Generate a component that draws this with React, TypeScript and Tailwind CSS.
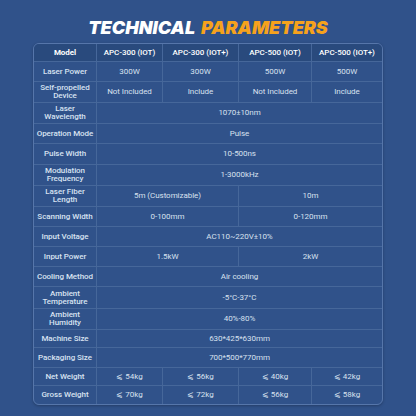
import React from "react";

type Cell = { t: string; span?: number };
type Row = { label: string; cells: Cell[] };

const rows: Row[] = [
  { label: "Laser Power", cells: [{ t: "300W" }, { t: "300W" }, { t: "500W" }, { t: "500W" }] },
  { label: "Self-propelled Device", cells: [{ t: "Not Included" }, { t: "Include" }, { t: "Not Included" }, { t: "Include" }] },
  { label: "Laser Wavelength", cells: [{ t: "1070±10nm", span: 4 }] },
  { label: "Operation Mode", cells: [{ t: "Pulse", span: 4 }] },
  { label: "Pulse Width", cells: [{ t: "10-500ns", span: 4 }] },
  { label: "Modulation Frequency", cells: [{ t: "1-3000kHz", span: 4 }] },
  { label: "Laser Fiber Length", cells: [{ t: "5m (Customizable)", span: 2 }, { t: "10m", span: 2 }] },
  { label: "Scanning Width", cells: [{ t: "0-100mm", span: 2 }, { t: "0-120mm", span: 2 }] },
  { label: "Input Voltage", cells: [{ t: "AC110~220V±10%", span: 4 }] },
  { label: "Input Power", cells: [{ t: "1.5kW", span: 2 }, { t: "2kW", span: 2 }] },
  { label: "Cooling Method", cells: [{ t: "Air cooling", span: 4 }] },
  { label: "Ambient Temperature", cells: [{ t: "-5°C-37°C", span: 4 }] },
  { label: "Ambient Humidity", cells: [{ t: "40%-80%", span: 4 }] },
  { label: "Machine Size", cells: [{ t: "630*425*630mm", span: 4 }] },
  { label: "Packaging Size", cells: [{ t: "700*500*770mm", span: 4 }] },
  { label: "Net Weight", cells: [{ t: "⩽ 54kg" }, { t: "⩽ 56kg" }, { t: "⩽ 40kg" }, { t: "⩽ 42kg" }] },
  { label: "Gross Weight", cells: [{ t: "⩽ 70kg" }, { t: "⩽ 72kg" }, { t: "⩽ 56kg" }, { t: "⩽ 58kg" }] },
];

const twoLine: Record<string, [string, string]> = {
  "Self-propelled Device": ["Self-propelled", "Device"],
  "Laser Wavelength": ["Laser", "Wavelength"],
  "Modulation Frequency": ["Modulation", "Frequency"],
  "Laser Fiber Length": ["Laser Fiber", "Length"],
  "Ambient Temperature": ["Ambient", "Temperature"],
  "Ambient Humidity": ["Ambient", "Humidity"],
};

const headers = ["APC-300 (IOT)", "APC-300 (IOT+)", "APC-500 (IOT)", "APC-500 (IOT+)"];

const spanClass: Record<number, string> = {
  1: "col-span-1",
  2: "col-span-2",
  4: "col-span-4",
};

export default function App() {
  const lastRow = rows.length - 1;
  return (
    <div
      className="w-[416px] h-[416px] bg-[#30528a] flex flex-col items-center overflow-hidden"
      style={{ fontFamily: "Roboto, 'Liberation Sans', sans-serif" }}
    >
      <div
        className="mt-[14px] h-[27px] flex items-center text-[18px] font-black italic tracking-[0px] leading-none"
        style={{ fontFamily: "Inter, 'Liberation Sans', sans-serif" }}
      >
        <span className="text-white">TECHNICAL</span>
        <span className="text-[#f6a21c] ml-[6px]">PARAMETERS</span>
      </div>
      <div className="mt-[2px] w-[350px] border border-[#5676aa] rounded-[6px] overflow-hidden shadow-[0_1px_3px_rgba(0,0,0,0.25)]">
        <div className="grid grid-cols-[63px_66px_76px_73px_70px] grid-rows-[18px_20px_21px_21px_20px_21px_21px_21px_20px_20px_20px_20px_22px_21px_18px_20px_18px_18px] text-[8px] leading-[8px] text-[#dfe7f3] tracking-[-0.05px]">
          <div className="bg-[#294a7d] border-r border-b border-[#46679a] flex items-center justify-center font-bold text-white">
            Model
          </div>
          {headers.map((h, i) => (
            <div
              key={h}
              className={`bg-[#294a7d] border-b border-[#46679a] flex items-center justify-center font-medium text-white ${
                i < 3 ? "border-r" : ""
              }`}
            >
              {h}
            </div>
          ))}
          {rows.map((r, ri) => (
            <React.Fragment key={r.label}>
              <div
                className={`border-r border-[#46679a] flex flex-col items-center justify-center text-center font-medium text-[#d8e2f1] whitespace-nowrap ${
                  ri < lastRow ? "border-b" : ""
                }`}
              >
                {twoLine[r.label] ? (
                  <>
                    <span>{twoLine[r.label][0]}</span>
                    <span>{twoLine[r.label][1]}</span>
                  </>
                ) : (
                  <span>{r.label}</span>
                )}
              </div>
              {r.cells.map((c, ci) => {
                let pos = 0;
                for (let k = 0; k < ci; k++) pos += r.cells[k].span ?? 1;
                pos += c.span ?? 1;
                return (
                  <div
                    key={ci}
                    className={`${spanClass[c.span ?? 1]} border-[#46679a] flex items-center justify-center text-center text-[#d8e1ef] ${
                      pos < 4 ? "border-r" : ""
                    } ${ri < lastRow ? "border-b" : ""}`}
                  >
                    {c.t}
                  </div>
                );
              })}
            </React.Fragment>
          ))}
        </div>
      </div>
    </div>
  );
}
